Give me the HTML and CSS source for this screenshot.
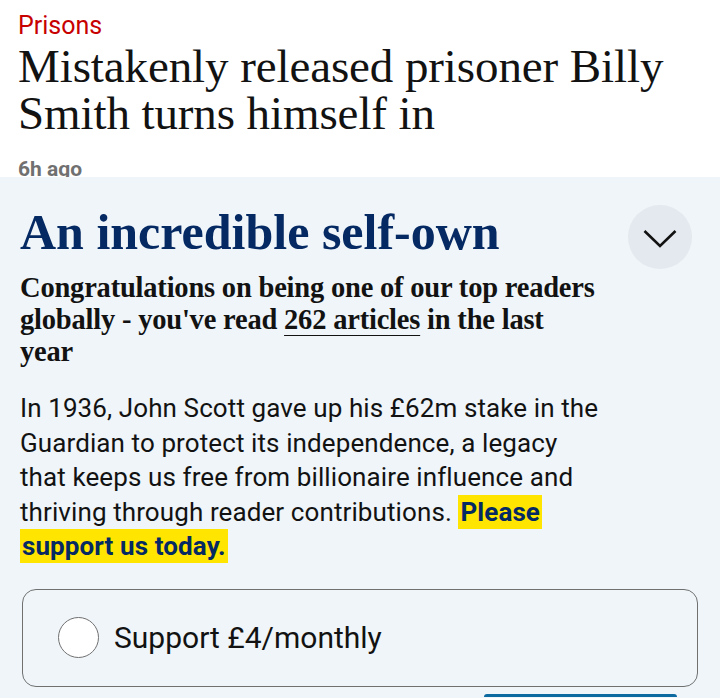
FILE: index.html
```html
<!DOCTYPE html>
<html lang="en">
<head>
<meta charset="utf-8">
<title>Prisons</title>
<link rel="stylesheet" href="styles.css">
</head>
<body>
<header class="article">
  <div class="kicker">Prisons</div>
  <h1 class="headline">Mistakenly released prisoner Billy Smith turns himself in</h1>
  <div class="age">6h ago</div>
</header>
<section class="epic">
  <div class="epic-top">
    <h2 class="epic-title">An incredible self-own</h2>
    <button class="toggle" aria-label="Collapse">
      <svg width="34" height="20" viewBox="0 0 34 20"><path d="M1.5 2 L17 17 L32.5 2" fill="none" stroke="#121212" stroke-width="2.6"/></svg>
    </button>
  </div>
  <p class="congrats">Congratulations on being one of our top readers globally - you've read <span class="count">262 articles</span> in the last year</p>
  <p class="body">In 1936, John Scott gave up his £62m stake in the Guardian to protect its independence, a legacy that keeps us free from billionaire influence and thriving through reader contributions. <mark class="hl">Please support us today.</mark></p>
  <label class="option">
    <span class="radio"></span>
    <span class="opt-text">Support £4/monthly</span>
  </label>
  <div class="cta-row"><div class="cta"></div></div>
</section>
</body>
</html>
```
FILE: styles.css
```css
html, body { margin: 0; padding: 0; }
body {
  background: #eff5f9;
  font-family: Roboto, "Liberation Sans", sans-serif;
  color: #121212;
  width: 720px;
  height: 698px;
  overflow: hidden;
}
.article {
  background: #ffffff;
  padding: 11px 18px 0 18px;
  height: 166px;
  overflow: hidden;
}
.kicker {
  color: #c70000;
  font-size: 25px;
  line-height: 30px;
}
.headline {
  margin: 2px 0 0 0;
  font-family: "Liberation Serif", serif;
  font-weight: 400;
  font-size: 47px;
  line-height: 47px;
  letter-spacing: -0.1px;
  color: #121212;
  width: 690px;
}
.age {
  margin-top: 20px;
  color: #707070;
  font-weight: 700;
  font-size: 21px;
  line-height: 24px;
}
.epic {
  padding: 26px 20px 0 20px;
}
.epic-top {
  display: flex;
  justify-content: space-between;
  align-items: flex-start;
  height: 58px;
}
.epic-title {
  margin: 0;
  font-family: "Liberation Serif", serif;
  font-weight: 700;
  font-size: 50px;
  line-height: 58px;
  letter-spacing: 0;
  color: #052962;
}
.toggle {
  flex: none;
  width: 64px;
  height: 64px;
  border-radius: 50%;
  border: none;
  background: #e3e9ee;
  margin-top: 2px;
  margin-right: 8px;
  display: flex;
  align-items: center;
  justify-content: center;
  padding: 4px 0 0 0;
}
.congrats {
  margin: 11px 0 0 0;
  font-family: "Liberation Serif", serif;
  font-weight: 700;
  font-size: 28.5px;
  line-height: 32px;
  letter-spacing: -0.2px;
  width: 578px;
}
.count {
  text-decoration: underline;
  text-decoration-thickness: 1px;
  text-underline-offset: 6px;
}
.body {
  margin: 23px 0 0 0;
  font-size: 26px;
  line-height: 34.5px;
  letter-spacing: 0.1px;
  width: 584px;
}
.hl {
  background: #ffe500;
  color: #052962;
  font-weight: 700;
  padding: 2px 2px;
  -webkit-box-decoration-break: clone;
  box-decoration-break: clone;
}
.option {
  margin: 25px 2px 0 2px;
  height: 96px;
  border: 1px solid #707070;
  border-radius: 14px;
  display: flex;
  align-items: center;
  padding-left: 35px;
  gap: 15px;
}
.radio {
  width: 41px;
  height: 41px;
  border: 1px solid #707070;
  border-radius: 50%;
  box-sizing: border-box;
  background: #fff;
}
.opt-text {
  font-size: 30px;
}
.cta-row {
  display: flex;
  justify-content: flex-end;
  padding-right: 23px;
  margin-top: 7px;
}
.cta {
  width: 193px;
  height: 3px;
  background: #0d6aa0;
  border-radius: 3px 3px 0 0;
}
```
